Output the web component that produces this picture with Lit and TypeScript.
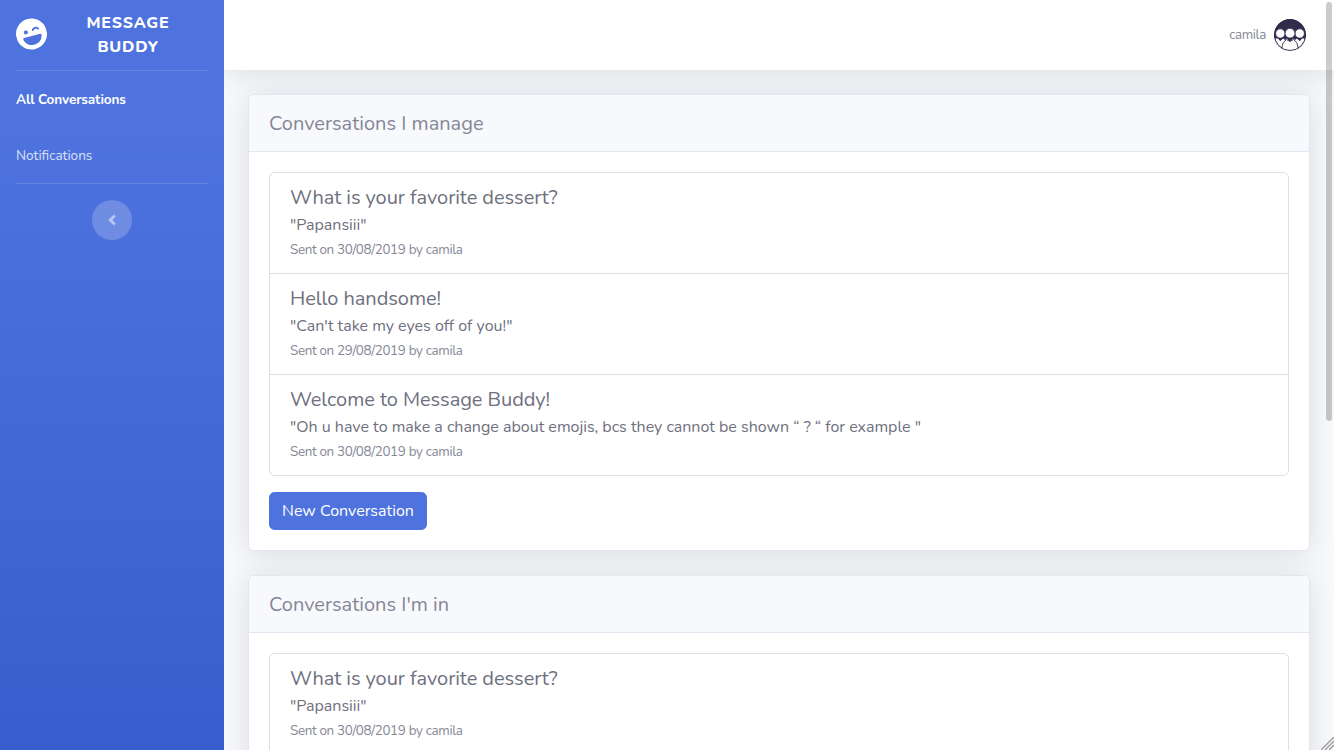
import { LitElement, html, css } from "lit";
import { customElement } from "lit/decorators.js";

interface Conversation {
  title: string;
  message: string;
  sent: string;
}

const managed: Conversation[] = [
  { title: "What is your favorite dessert?", message: '"Papansiii"', sent: "Sent on 30/08/2019 by camila" },
  { title: "Hello handsome!", message: `"Can't take my eyes off of you!"`, sent: "Sent on 29/08/2019 by camila" },
  {
    title: "Welcome to Message Buddy!",
    message: '"Oh u have to make a change about emojis, bcs they cannot be shown “ ? “ for example "',
    sent: "Sent on 30/08/2019 by camila",
  },
];

const joined: Conversation[] = [managed[0]];

@customElement("app-root")
export class AppRoot extends LitElement {
  static styles = css`
    :host {
      display: block;
      position: relative;
      height: 750px;
      overflow: hidden;
      background: #f8f9fc;
      color: #858796;
      font: 400 16px/24px Nunito, Lato, sans-serif;
    }
    * { box-sizing: border-box; }
    .wrapper { display: flex; height: 1338px; }
    .sidebar {
      width: 224px;
      flex: none;
      background: linear-gradient(180deg, #4e73df 10%, #224abe 100%);
      color: #fff;
      padding: 0 16px;
    }
    .brand { display: flex; align-items: center; height: 70px; }
    .logo { width: 31px; height: 32px; transform: rotate(-15deg); flex: none; display: block; margin-top: -2px; }
    .name {
      flex: 1;
      margin: 0 15px 0 16px;
      text-align: center;
      font-weight: 800;
      letter-spacing: 0.8px;
    }
    .divider { height: 1px; background: rgba(255, 255, 255, 0.15); }
    .nav { display: flex; flex-direction: column; font-size: 13.6px; line-height: 20px; }
    .link { height: 56px; padding-top: 19px; color: rgba(255, 255, 255, 0.8); }
    .link.active { font-weight: 700; color: #fff; letter-spacing: -0.13px; }
    .toggle {
      width: 40px;
      height: 40px;
      margin: 16px auto 0;
      border-radius: 50%;
      background: rgba(255, 255, 255, 0.2);
      display: flex;
      align-items: center;
      justify-content: center;
    }
    .toggle svg { width: 8px; height: 16px; margin-right: 1px; opacity: 0.5; fill: #fff; stroke: #fff; stroke-width: 18; }
    .content { flex: 1; min-width: 0; overflow: hidden; }
    .topbar {
      height: 70px;
      background: #fff;
      box-shadow: 0 2.4px 28px 0 rgba(58, 59, 69, 0.15);
      display: flex;
      align-items: center;
      justify-content: flex-end;
      gap: 8px;
      padding-right: 28px;
    }
    .user { font-size: 13.3px; letter-spacing: -0.3px; }
    .avatar { width: 32px; height: 32px; display: block; }
    .cards { display: flex; flex-direction: column; gap: 24px; padding: 24px; }
    .card {
      background: #fff;
      border: 1px solid #e3e6f0;
      border-radius: 5.6px;
      box-shadow: 0 2.4px 28px 0 rgba(58, 59, 69, 0.15);
    }
    .head {
      padding: 17px 20px 15px;
      border-bottom: 1px solid #e3e6f0;
      border-radius: 5px 5px 0 0;
      background: #f8f9fc;
      font-size: 20px;
      line-height: 24px;
    }
    .body { padding: 20px; }
    .list {
      border: 1px solid rgba(0, 0, 0, 0.125);
      border-radius: 5.6px;
      margin-bottom: 16px;
      color: #6e707e;
    }
    .item { padding: 13px 20px 11px; }
    .item + .item { border-top: 1px solid rgba(0, 0, 0, 0.125); }
    .title { font-size: 20px; margin-bottom: 3px; letter-spacing: -0.06px; }
    .sent { font-size: 13.4px; color: #858796; padding-top: 1px; letter-spacing: -0.33px; }
    .button {
      display: block;
      height: 38px;
      border: 1px solid #4e73df;
      border-radius: 5.6px;
      background: #4e73df;
      color: #fff;
      font: inherit;
      width: 158px;
      padding: 0;
    }
    .thumb {
      position: absolute;
      right: 2px;
      top: 2px;
      width: 6px;
      height: 419px;
      border-radius: 3px;
      background: rgba(0, 0, 0, 0.2);
    }
    .grip { position: absolute; right: 0; bottom: 0; width: 13px; height: 13px; }
  `;

  private card(heading: string, conversations: Conversation[]) {
    return html`<section class="card">
      <div class="head">${heading}</div>
      <div class="body">
        <div class="list">
          ${conversations.map(
            (c) => html`<div class="item">
              <div class="title">${c.title}</div>
              <div class="message">${c.message}</div>
              <div class="sent">${c.sent}</div>
            </div>`
          )}
        </div>
        ${conversations === managed ? html`<button class="button">New Conversation</button>` : ""}
      </div>
    </section>`;
  }

  render() {
    return html`
      <div class="wrapper">
        <nav class="sidebar">
          <div class="brand">
            <svg class="logo" viewBox="0 0 496 512" fill="#fff">
              <path d="M248 8C111 8 0 119 0 256s111 248 248 248 248-111 248-248S385 8 248 8zm80 152c25.700 0 55.900 16.900 59.800 42.100 1.800 11.200-11.500 18.200-19.800 10.800l-9.500-8.500c-14.800-13.200-46.200-13.200-61 0L288 213c-8.300 7.400-21.600.4-19.800-10.800C272.100 176.900 302.300 160 328 160zm-160 16c17.700 0 32 14.300 32 32s-14.300 32-32 32-32-14.300-32-32 14.300-32 32-32zm86 256h-12c-73.400 0-134-55-142.900-126-1.200-9.500 6.300-18 15.900-18h270c9.600 0 17.100 8.400 15.900 18-8.900 71-69.500 126-142.900 126z" />
            </svg>
            <div class="name">MESSAGE BUDDY</div>
          </div>
          <div class="divider"></div>
          <div class="nav">
            <a class="link active">All Conversations</a>
            <a class="link">Notifications</a>
          </div>
          <div class="divider"></div>
          <div class="toggle">
            <svg viewBox="0 0 256 512">
              <path d="M31.700 239l136-136c9.400-9.400 24.600-9.400 33.900 0l22.600 22.600c9.400 9.400 9.400 24.600 0 33.900L127.900 256l96.400 96.400c9.400 9.400 9.400 24.600 0 33.900L201.700 409c-9.400 9.400-24.600 9.400-33.900 0l-136-136c-9.500-9.400-9.500-24.600-.1-34z" />
            </svg>
          </div>
        </nav>
        <main class="content">
          <header class="topbar">
            <span class="user">camila</span>
            <svg class="avatar" viewBox="0 0 32 32">
              <defs><clipPath id="disc"><circle cx="16" cy="16" r="16" /></clipPath></defs>
              <g clip-path="url(#disc)">
                <rect width="32" height="32" fill="#312c4b" />
                <path d="M0 19.500H4L6.300 22L9 19.500L11 21L13 19.500L16 22L19 19.500L21 21L23 19.500L25.700 22L28 19.500H32V32H0Z" fill="#fff" />
                <g fill="#fff" stroke="#312c4b" stroke-width="0.8">
                  <circle cx="6.300" cy="14.500" r="4.700" />
                  <circle cx="25.700" cy="14.500" r="4.700" />
                  <circle cx="16" cy="14.200" r="4.900" />
                </g>
                <path d="M8 32V28Q8.300 22.500 12.500 20.500L16 22.500L19.500 20.500Q23.700 22.500 24 28V32" fill="#fff" stroke="#312c4b" stroke-width="0.9" />
                <path d="M4 19H8.600L6.300 22ZM12.800 19H19.200L16 22.500ZM23.400 19H28L25.700 22Z" fill="#312c4b" />
                <circle cx="16" cy="16" r="15.500" fill="none" stroke="#312c4b" stroke-width="1" />
              </g>
            </svg>
          </header>
          <div class="cards">
            ${this.card("Conversations I manage", managed)} ${this.card("Conversations I'm in", joined)}
          </div>
        </main>
      </div>
      <div class="thumb"></div>
      <svg class="grip" viewBox="0 0 13 13">
        <path d="M0 13L13 0M4 13L13 4M8 13L13 8" stroke="#999" stroke-width="1.300" />
      </svg>
    `;
  }
}
